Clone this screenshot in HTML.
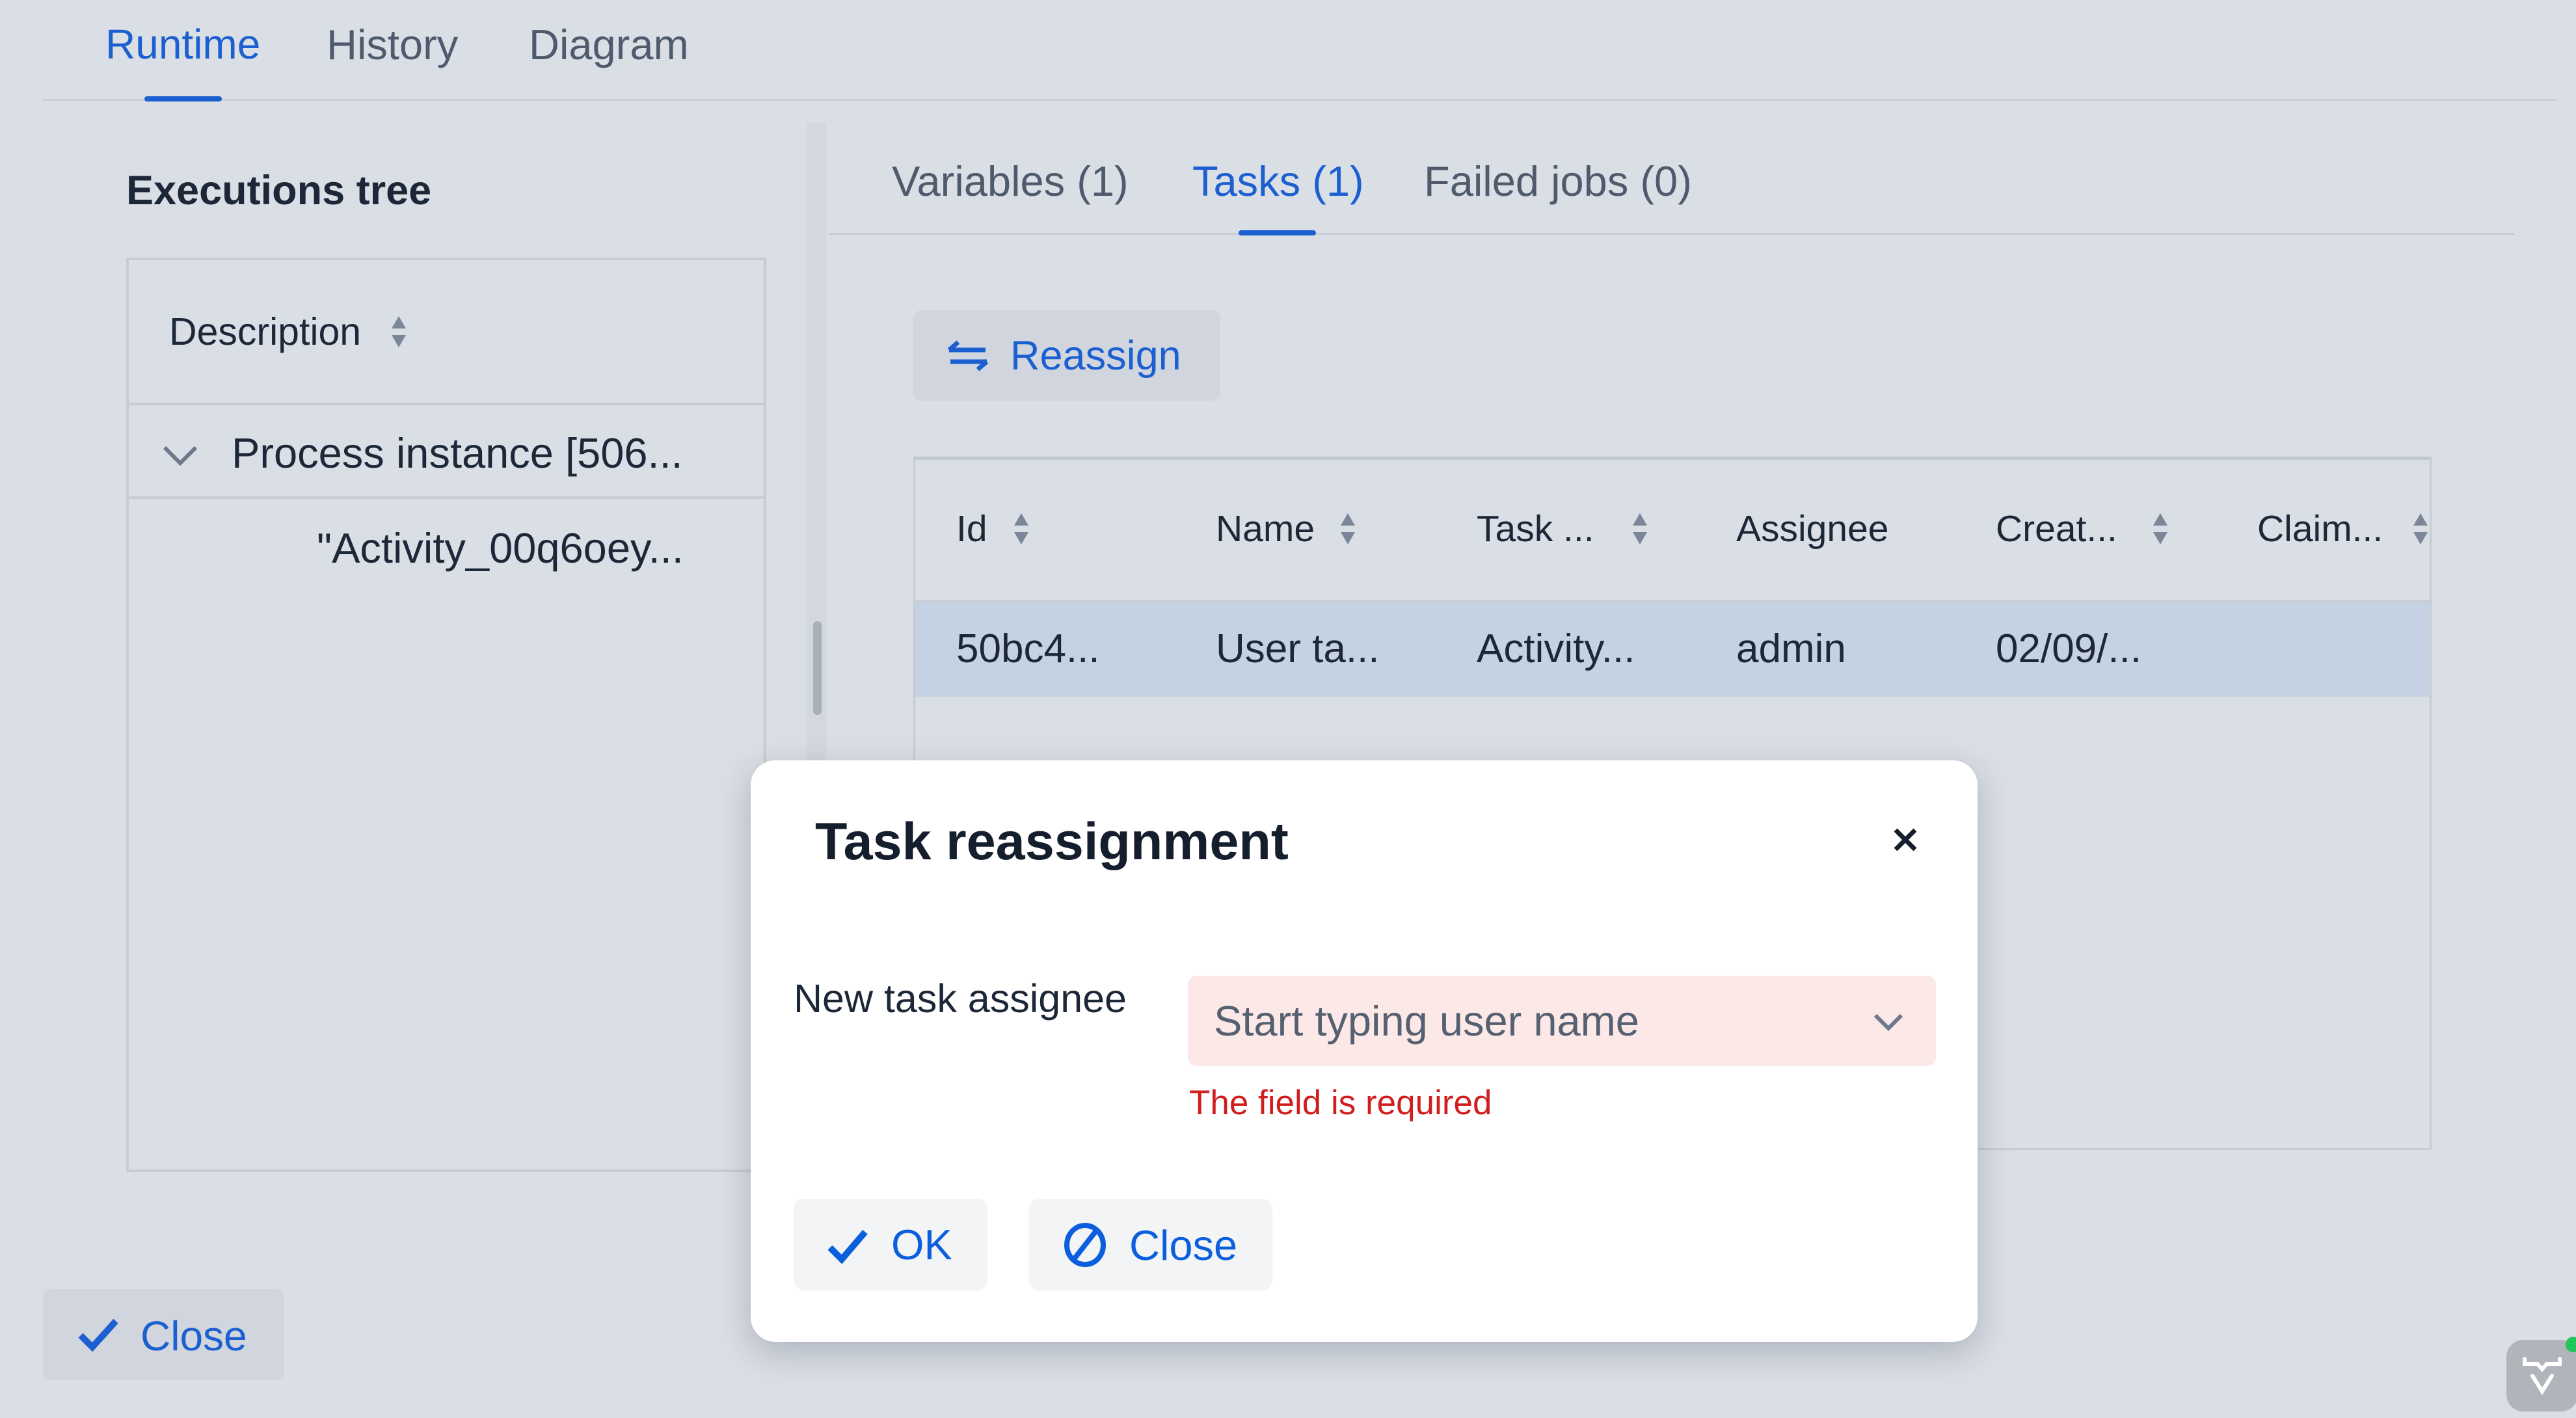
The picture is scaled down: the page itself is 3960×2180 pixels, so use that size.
<!DOCTYPE html>
<html><head><meta charset="utf-8"><style>
*{margin:0;padding:0;box-sizing:border-box}
body{width:3960px;height:2180px;background:#dadee5;position:relative;overflow:hidden;font-family:"Liberation Sans",sans-serif;color:#1c2738}
.t{position:absolute;white-space:nowrap;line-height:1}
.sort{position:absolute;width:26px;height:54px}
.blue{color:#1b5fd0}
</style></head><body>
<div class="t blue" style="left:162px;top:36px;font-size:64px">Runtime</div>
<div class="t" style="left:502px;top:36px;font-size:65px;color:#4f5b6d">History</div>
<div class="t" style="left:813px;top:36px;font-size:65px;color:#4f5b6d">Diagram</div>
<div style="position:absolute;left:66px;top:152px;width:3864px;height:3px;background:#c9ced6"></div>
<div style="position:absolute;left:222px;top:148px;width:119px;height:8px;border-radius:4px;background:#1b5fd0"></div>

<div class="t" style="left:194px;top:262px;font-size:63px;font-weight:bold">Executions tree</div>
<div style="position:absolute;left:194px;top:396px;width:984px;height:1406px;border:4px solid #c7ccd4"></div>
<div style="position:absolute;left:196px;top:619px;width:980px;height:4px;background:#c7ccd4"></div>
<div style="position:absolute;left:196px;top:763px;width:980px;height:4px;background:#c7ccd4"></div>
<div class="t" style="left:260px;top:481px;font-size:59px">Description</div>
<svg class="sort" style="left:600px;top:483px" viewBox="0 0 26 54"><path d="M13 3 L24 22 L2 22Z M13 51 L24 32 L2 32Z" fill="#7b8698"/></svg>
<svg style="position:absolute;left:247px;top:680px" width="60" height="40" viewBox="0 0 60 40"><path d="M6 8 L30 32 L54 8" stroke="#6e798b" stroke-width="6" fill="none"/></svg>
<div class="t" style="left:356px;top:664px;font-size:65px">Process instance [506...</div>
<div class="t" style="left:487px;top:810px;font-size:65px">"Activity_00q6oey...</div>

<div style="position:absolute;left:1240px;top:189px;width:30px;height:980px;background:#d3d8df"></div>
<div style="position:absolute;left:1250px;top:955px;width:13px;height:144px;border-radius:6px;background:#a9b0ba"></div>

<div class="t" style="left:1371px;top:246px;font-size:65px;color:#4f5b6d">Variables (1)</div>
<div class="t blue" style="left:1833px;top:246px;font-size:65px">Tasks (1)</div>
<div class="t" style="left:2189px;top:246px;font-size:65px;color:#4f5b6d">Failed jobs (0)</div>
<div style="position:absolute;left:1275px;top:358px;width:2590px;height:3px;background:#c9ced6"></div>
<div style="position:absolute;left:1904px;top:354px;width:119px;height:8px;border-radius:4px;background:#1b5fd0"></div>

<div style="position:absolute;left:1404px;top:477px;width:472px;height:139px;border-radius:12px;background:#d1d6de"></div>
<svg style="position:absolute;left:1455px;top:522px" width="66" height="50" viewBox="0 0 66 50"><path d="M4 16 H60 M4 16 L18 4 M4 16 L18 16 M62 34 H6 M62 34 L48 46" stroke="#1b5fd0" stroke-width="7" fill="none"/></svg>
<div class="t blue" style="left:1553px;top:516px;font-size:63px">Reassign</div>

<div style="position:absolute;left:1404px;top:702px;width:2334px;height:1066px;border:3px solid #c7ccd4;border-top:5px solid #c2c8d1"></div>
<div style="position:absolute;left:1407px;top:922px;width:2328px;height:4px;background:#c9ced6"></div>
<div style="position:absolute;left:1407px;top:926px;width:2328px;height:145px;background:#c5d2e3"></div>
<div class="t" style="left:1470px;top:785px;font-size:57px">Id</div>
<svg class="sort" style="left:1557px;top:786px" viewBox="0 0 26 54"><path d="M13 3 L24 22 L2 22Z M13 51 L24 32 L2 32Z" fill="#7b8698"/></svg>
<div class="t" style="left:1869px;top:785px;font-size:57px">Name</div>
<svg class="sort" style="left:2059px;top:786px" viewBox="0 0 26 54"><path d="M13 3 L24 22 L2 22Z M13 51 L24 32 L2 32Z" fill="#7b8698"/></svg>
<div class="t" style="left:2270px;top:785px;font-size:57px">Task ...</div>
<svg class="sort" style="left:2508px;top:786px" viewBox="0 0 26 54"><path d="M13 3 L24 22 L2 22Z M13 51 L24 32 L2 32Z" fill="#7b8698"/></svg>
<div class="t" style="left:2669px;top:785px;font-size:57px">Assignee</div>
<div class="t" style="left:3068px;top:785px;font-size:57px">Creat...</div>
<svg class="sort" style="left:3308px;top:786px" viewBox="0 0 26 54"><path d="M13 3 L24 22 L2 22Z M13 51 L24 32 L2 32Z" fill="#7b8698"/></svg>
<div class="t" style="left:3470px;top:785px;font-size:57px">Claim...</div>
<svg class="sort" style="left:3708px;top:786px" viewBox="0 0 26 54"><path d="M13 3 L24 22 L2 22Z M13 51 L24 32 L2 32Z" fill="#7b8698"/></svg>
<div class="t" style="left:1470px;top:967px;font-size:62px">50bc4...</div>
<div class="t" style="left:1869px;top:967px;font-size:62px">User ta...</div>
<div class="t" style="left:2270px;top:967px;font-size:62px">Activity...</div>
<div class="t" style="left:2669px;top:967px;font-size:62px">admin</div>
<div class="t" style="left:3068px;top:967px;font-size:62px">02/09/...</div>

<div style="position:absolute;left:66px;top:1982px;width:371px;height:139px;border-radius:12px;background:#d1d6de"></div>
<svg style="position:absolute;left:118px;top:2025px" width="66" height="54" viewBox="0 0 66 54"><path d="M6 28 L24 46 L60 6" stroke="#1b5fd0" stroke-width="10" fill="none"/></svg>
<div class="t blue" style="left:216px;top:2022px;font-size:64px">Close</div>

<div style="position:absolute;left:3853px;top:2060px;width:110px;height:110px;border-radius:26px;background:#b1b4ba"></div>
<svg style="position:absolute;left:3875px;top:2085px" width="66" height="60" viewBox="0 0 66 60"><path d="M6 4 V12 H26 L33 20 L40 12 H60 V4 M18 30 L33 54 L48 30" stroke="#fff" stroke-width="6" fill="none" stroke-linecap="round"/></svg>
<div style="position:absolute;left:3944px;top:2055px;width:24px;height:24px;border-radius:50%;background:#22c55e"></div>

<div style="position:absolute;left:1154px;top:1169px;width:1886px;height:894px;border-radius:38px;background:#fff;box-shadow:0 16px 50px rgba(40,50,70,.25)"></div>
<div class="t" style="left:1253px;top:1254px;font-size:81px;font-weight:bold;color:#151e2c">Task reassignment</div>
<svg style="position:absolute;left:2908px;top:1270px" width="42" height="42" viewBox="0 0 42 42"><path d="M6 6 L36 36 M36 6 L6 36" stroke="#151e2c" stroke-width="7"/></svg>
<div class="t" style="left:1220px;top:1505px;font-size:61px">New task assignee</div>
<div style="position:absolute;left:1826px;top:1500px;width:1150px;height:139px;border-radius:14px;background:#fde8e8"></div>
<div class="t" style="left:1866px;top:1537px;font-size:65px;color:#556070">Start typing user name</div>
<svg style="position:absolute;left:2878px;top:1555px" width="50" height="32" viewBox="0 0 50 32"><path d="M5 6 L25 26 L45 6" stroke="#6e798b" stroke-width="6" fill="none"/></svg>
<div class="t" style="left:1828px;top:1669px;font-size:53px;color:#d01e1e">The field is required</div>

<div style="position:absolute;left:1220px;top:1843px;width:298px;height:141px;border-radius:16px;background:#f2f4f6"></div>
<svg style="position:absolute;left:1270px;top:1886px" width="66" height="60" viewBox="0 0 66 60"><path d="M6 32 L24 50 L60 8" stroke="#0b5fdc" stroke-width="10" fill="none"/></svg>
<div class="t" style="left:1370px;top:1881px;font-size:65px;color:#0b5fdc">OK</div>
<div style="position:absolute;left:1582px;top:1843px;width:374px;height:141px;border-radius:16px;background:#f2f4f6"></div>
<svg style="position:absolute;left:1634px;top:1879px" width="68" height="70" viewBox="0 0 68 70"><ellipse cx="34" cy="35" rx="28" ry="30" stroke="#0b5fdc" stroke-width="8" fill="none"/><path d="M52 12 L16 58" stroke="#0b5fdc" stroke-width="8"/></svg>
<div class="t" style="left:1736px;top:1882px;font-size:65px;color:#0b5fdc">Close</div>
</body></html>
